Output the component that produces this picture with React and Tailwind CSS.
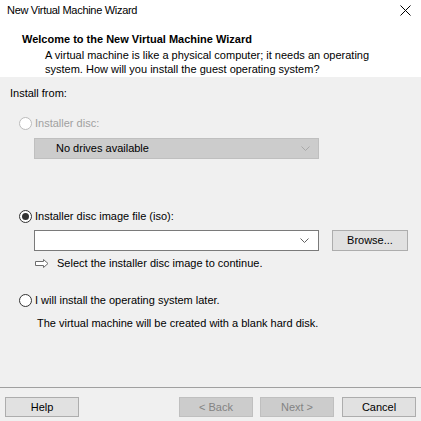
import React from "react";

const FONT = { fontFamily: '"Liberation Sans", Arial, sans-serif' };

function Radio({ checked, disabled }) {
  return (
    <span
      className={`relative inline-flex h-[13px] w-[13px] shrink-0 items-center justify-center rounded-full border bg-white ${
        disabled ? "border-[#bcbcbc]" : "border-[#333333]"
      }`}
    >
      {checked && <span className="h-[7px] w-[7px] rounded-full bg-[#333333]" />}
    </span>
  );
}

function Chevron({ color }) {
  return (
    <svg width="9" height="5" viewBox="0 0 9 5" className="shrink-0">
      <path d="M0.5 0.5 L4.5 4.5 L8.5 0.5" fill="none" stroke={color} strokeWidth="1" />
    </svg>
  );
}

function Btn({ children, disabled, className = "" }) {
  return (
    <div
      className={`flex h-[20px] w-[74px] items-center justify-center border ${
        disabled
          ? "border-[#bfbfbf] bg-[#cccccc] text-[#838383]"
          : "border-[#adadad] bg-[#e1e1e1] text-black"
      } ${className}`}
    >
      {children}
    </div>
  );
}

export default function App() {
  return (
    <div className="flex h-[421px] w-[421px] flex-col bg-[#f0f0f0] text-[11px] text-black whitespace-nowrap" style={FONT}>
      {/* header */}
      <div className="relative h-[77px] shrink-0 bg-white">
        <div className="pl-[7px] pt-[3px] text-[11px] leading-[14px] tracking-[-0.3px]">New Virtual Machine Wizard</div>
        <svg width="11" height="11" viewBox="0 0 11 11" className="absolute right-[10px] top-[5px]">
          <path d="M0.5 0.5 L10.5 10.5 M10.5 0.5 L0.5 10.5" stroke="#000" strokeWidth="1" />
        </svg>
        <div className="mt-[15px] pl-[22px] font-bold leading-[14px]">Welcome to the New Virtual Machine Wizard</div>
        <div className="mt-[2px] pl-[45px] leading-[14px]">
          <div>A virtual machine is like a physical computer; it needs an operating</div>
          <div>system. How will you install the guest operating system?</div>
        </div>
      </div>

      {/* body */}
      <div className="flex flex-1 flex-col">
        <div className="mt-[9px] pl-[10px] leading-[14px]">Install from:</div>

        <div className="mt-[16px] flex items-center gap-[3px] pl-[19px] leading-[14px] text-[#a0a0a0]">
          <Radio disabled />
          <span>Installer disc:</span>
        </div>
        <div className="ml-[34px] mt-[8px] flex h-[21px] w-[285px] items-center justify-between border border-[#bfbfbf] bg-[#cccccc] pl-[21px] pr-[8px]">
          <span>No drives available</span>
          <Chevron color="#a8a8a8" />
        </div>

        <div className="mt-[50px] flex items-center gap-[3px] pl-[19px] leading-[14px]">
          <Radio checked />
          <span>Installer disc image file (iso):</span>
        </div>
        <div className="mt-[7px] flex items-center">
          <div className="ml-[34px] flex h-[21px] w-[285px] items-center justify-end border border-[#7a7a7a] bg-white pr-[9px]">
            <Chevron color="#606060" />
          </div>
          <div className="ml-[13px] flex h-[21px] w-[76px] items-center justify-center border border-[#adadad] bg-[#e1e1e1]">
            Browse...
          </div>
        </div>
        <div className="mt-[5px] flex items-center pl-[35px] leading-[14px]">
          <svg width="14" height="9" viewBox="0 0 14 9" className="shrink-0">
            <path d="M0.5 2.5 H8.5 V0.5 L13 4.5 L8.5 8.5 V6.5 H0.5 Z" fill="#fff" stroke="#6d6d6d" strokeWidth="1" />
          </svg>
          <span className="ml-[8px]">Select the installer disc image to continue.</span>
        </div>

        <div className="mt-[23px] flex items-center gap-[3px] pl-[19px] leading-[14px]">
          <Radio />
          <span>I will install the operating system later.</span>
        </div>
        <div className="mt-[9px] pl-[37px] leading-[14px]">The virtual machine will be created with a blank hard disk.</div>
      </div>

      {/* footer */}
      <div className="h-[34px] shrink-0 border-t border-[#a0a0a0]">
        <div className="mt-[9px] flex items-center px-[5px]">
          <Btn>Help</Btn>
          <div className="flex-1" />
          <Btn disabled>&lt; Back</Btn>
          <Btn disabled className="ml-[7px]">Next &gt;</Btn>
          <Btn className="ml-[8px]">Cancel</Btn>
        </div>
      </div>
    </div>
  );
}
